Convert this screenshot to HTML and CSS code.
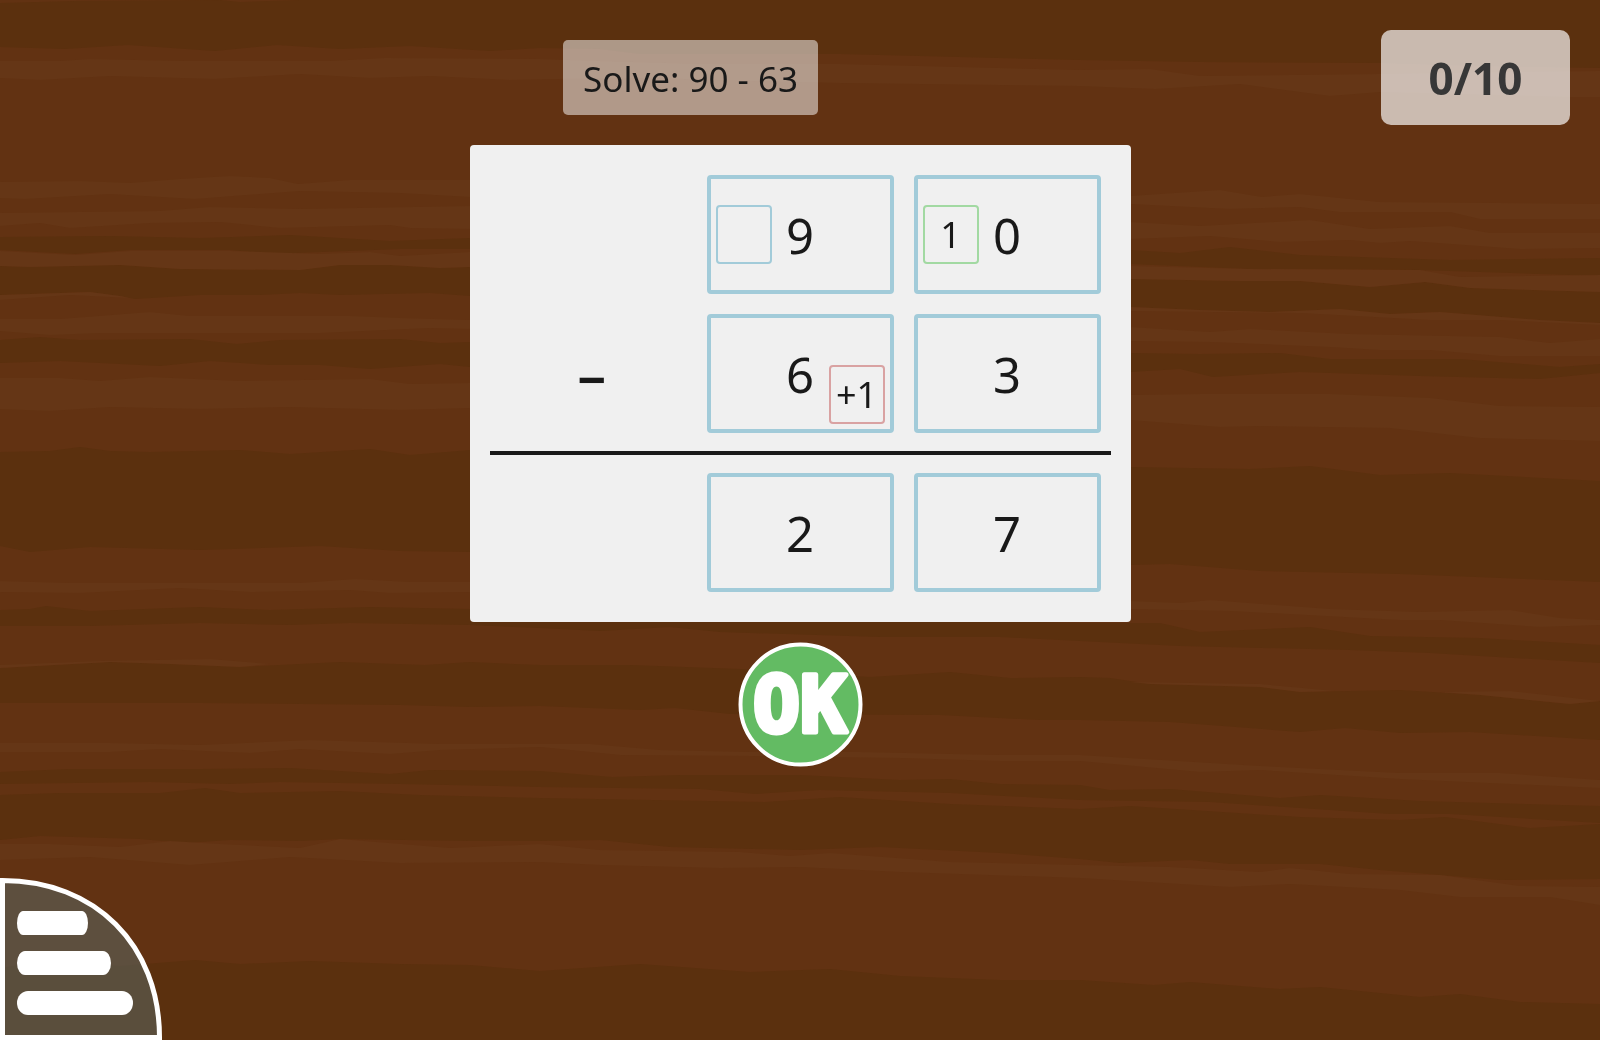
FILE: index.html
```html
<!DOCTYPE html>
<html lang="en">
<head>
<meta charset="utf-8">
<meta name="viewport" content="width=device-width, initial-scale=1">
<title>Vertical subtraction</title>
<link rel="stylesheet" href="styles.css">
</head>
<body>
<svg class="wood" viewBox="0 0 1600 1040" preserveAspectRatio="none" aria-hidden="true">
  <g class="grain-dark">
    <path d="M0 3L75 1L220 0L240 2L300 0H1600V68L1480 66L1380 63L1200 62L1080 60L840 54L640 54L600 49L540 48L490 51L410 46L340 49L277 45L215 51L128 45L65 49L0 47Z"/>
    <path d="M0 237L110 236L200 238L290 235L390 241L470 238L1130 250L1180 253L1230 247L1300 255L1450 260L1600 258V276L1420 270L1250 269L1130 264L470 249L400 249L270 254L230 250L130 250L75 254L0 250Z"/>
    <path d="M0 266L30 267L120 265L180 269L300 270L340 265L390 265L440 268L470 267L1130 279L1240 281L1300 281L1370 287L1425 282L1470 288L1600 292V323L1540 320L1440 312L1390 314L1340 309L1270 312L1200 310L1130 307L470 296L430 293L340 295L300 293L260 295L200 295L135 299L120 296L90 292L0 295Z"/>
    <path d="M0 340L40 337L80 340L190 339L237 344L280 340L400 339L440 343L470 342L1130 353L1200 354L1280 353L1330 359L1460 359L1560 367L1600 364V373L1570 376L1540 379L1420 376L1300 372L1213 377L1180 369L1130 372L470 367L440 364L370 369L320 365L270 365L210 361L160 366L60 361L0 363Z"/>
    <path d="M0 452L50 451L80 447L110 451L150 452L240 450L290 454L370 449L410 455L470 450L1130 467L1250 469L1310 466L1380 475L1450 473L1600 481V582L1400 574L1260 571L1170 564L1130 565L470 552L400 551L320 546L200 550L90 547L30 552L0 546Z"/>
    <path d="M0 610L30 609L46 606L90 611L200 607L270 610L370 607L470 609L1080 623L1160 623L1200 632L1310 627L1370 636L1480 638L1600 645V663L1430 653L1350 650L1180 646L1080 641L1000 637L880 637L720 632L670 627L600 631L540 628L470 625L350 623L290 625L200 623L90 626L0 626Z"/>
    <path d="M0 668L110 662L170 664L240 667L340 662L425 665L470 662L540 665L630 665L740 669L870 677L950 672L1010 678L1080 677L1110 678L1150 684L1260 687L1300 692L1400 690L1480 695L1570 704L1600 701V740L1470 732L1400 733L1345 728L1300 732L1170 722L1080 720L1040 720L940 715L730 714L675 708L640 710L540 706L470 707L400 705L200 703L0 703Z"/>
    <path d="M0 772L70 769L200 769L290 768L390 774L430 770L540 771L612 777L680 775L800 775L900 780L950 779L1000 784L1080 785L1110 790L1170 789L1280 798L1320 795L1420 801L1600 806V823L1450 814L1390 814L1210 802L1080 800L950 793L820 790L755 794L700 789L540 787L400 784L280 782L230 784L150 782L0 784Z"/>
    <path d="M0 795L60 793L160 793L205 788L240 793L340 791L420 795L540 798L765 802L840 797L950 804L1080 809L1130 806L1300 817L1400 820L1445 817L1530 828L1600 824V879L1500 880L1380 870L1320 864L1230 864L1190 860L1120 863L1080 859L1000 853L880 847L800 850L670 847L600 840L540 841L470 841L340 839L300 841L230 840L185 843L140 839L40 836L0 840Z"/>
    <path d="M0 968L40 962L120 966L195 960L240 964L310 961L400 964L470 965L540 971L640 964L750 972L830 969L900 976L1000 980L1080 980L1154 985L1190 982L1280 989L1320 987L1420 997L1460 994L1520 1002L1600 1004V1040H0Z"/>
  </g>
  <g class="grain-light">
    <path d="M0 61L60 61L90 59L185 61L330 61L385 58L540 59L600 61L700 64L840 64L1080 70L1150 69L1200 76L1380 74L1500 72L1600 71V97L1570 97L1380 92L1330 96L1240 84L1155 89L1080 86L840 83L750 81L650 78L560 79L510 80L430 76L370 78L300 74L215 79L110 76L40 80L0 78Z"/>
    <path d="M0 182L80 181L130 183L180 179L230 176L270 178L298 184L350 180L470 180L1130 196L1220 190L1262 197L1300 194L1380 202L1600 204V219L1480 219L1450 212L1340 212L1300 207L1230 209L1130 204L470 197L400 193L300 191L195 199L110 194L25 199L0 198Z"/>
    <path d="M0 213L160 211L210 207L300 209L470 206L1130 222L1200 226L1310 220L1370 229L1450 226L1490 233L1600 233V248L1520 249L1410 241L1380 243L1350 240L1280 242L1210 236L1130 239L470 229L410 228L390 225L280 228L220 222L150 223L70 228L40 223L0 226Z"/>
    <path d="M0 251L75 255L130 251L230 251L320 254L370 252L400 256L470 252L1130 266L1250 269L1420 270L1460 277L1600 275V292L1470 288L1425 282L1370 287L1300 281L1240 281L1130 279L470 267L440 268L390 265L340 265L300 270L180 269L120 265L30 267L0 266Z"/>
    <path d="M0 295L90 292L120 296L130 298L70 295L0 300Z"/>
    <path d="M1130 307L1200 310L1270 312L1340 309L1390 314L1440 312L1540 320L1600 323V325L1500 320L1430 320L1300 313L1130 311Z"/>
    <path d="M0 319L60 319L150 312L190 316L350 316L400 318L470 320L1130 327L1210 332L1250 329L1350 334L1500 337L1550 343L1600 339V356L1500 356L1430 350L1380 350L1330 347L1210 342L1130 341L470 329L430 328L320 333L230 333L100 333L50 335L0 331Z"/>
    <path d="M0 378L60 378L100 381L150 377L240 381L370 379L410 384L470 383L1130 395L1200 394L1330 394L1430 398L1500 406L1600 407V441L1480 438L1390 428L1260 426L1220 427L1130 420L470 408L400 410L290 407L200 409L110 407L50 411L0 409Z"/>
    <path d="M0 581L70 583L200 583L300 583L355 579L410 582L470 582L1130 601L1180 603L1210 600L1330 609L1420 612L1510 610L1560 618L1600 620V625L1540 627L1440 620L1400 620L1230 611L1130 609L470 592L390 593L350 590L250 592L180 588L80 593L0 592Z"/>
    <path d="M0 665L100 661L210 659L270 664L240 667L170 664L110 662L0 668Z"/>
    <path d="M1130 682L1260 684L1335 691L1300 692L1260 687L1150 684Z"/>
    <path d="M1440 692L1510 691L1600 701L1570 704L1480 695Z"/>
    <path d="M0 743L110 743L200 745L310 740L440 744L590 744L660 750L750 752L860 752L1000 755L1080 755L1260 766L1400 773L1500 773L1600 780V788L1400 779L1260 770L1200 772L1080 761L1000 761L900 758L750 756L620 755L540 747L440 750L390 754L300 749L250 753L160 749L110 752L0 752Z"/>
    <path d="M0 844L50 844L120 847L170 841L220 844L300 848L340 839L450 848L540 844L600 850L740 852L790 856L830 853L950 862L1080 865L1170 867L1260 872L1290 868L1350 874L1440 875L1520 886L1600 887V905L1550 897L1460 897L1400 890L1290 884L1230 887L1080 878L900 872L800 867L720 868L600 865L540 862L400 863L290 857L190 865L90 857L0 860Z"/>
  </g>
</svg>

<div class="activity">
  <header class="top-bar">
    <h1 class="prompt">Solve: 90 - 63</h1>
    <p class="score">0/10</p>
  </header>

  <main class="workspace">
    <section class="board" aria-label="Subtraction in columns">
      <div class="row">
        <span class="slot"></span>
        <div class="cell">
          <button class="helper" type="button" aria-label="Borrow from the tens"></button>
          <span class="digit">9</span>
        </div>
        <div class="cell">
          <button class="helper helper-borrow" type="button">1</button>
          <span class="digit">0</span>
        </div>
      </div>
      <div class="row">
        <span class="slot operator">−</span>
        <div class="cell">
          <span class="digit">6</span>
          <button class="helper helper-carry" type="button">+1</button>
        </div>
        <div class="cell">
          <span class="digit">3</span>
        </div>
      </div>
      <hr class="rule">
      <div class="row">
        <span class="slot"></span>
        <input class="cell answer" type="text" inputmode="numeric" maxlength="1" value="2" aria-label="Tens of the result">
        <input class="cell answer" type="text" inputmode="numeric" maxlength="1" value="7" aria-label="Units of the result">
      </div>
    </section>

    <button class="ok" type="button">
      <svg class="ok-icon" viewBox="0 0 125 125">
        <circle class="ok-disc" cx="62.5" cy="62.5" r="60"/>
        <text class="ok-text" x="62" y="90">OK</text>
      </svg>
    </button>
  </main>

  <button class="menu" type="button" aria-label="Menu">
    <svg class="menu-icon" viewBox="0 0 162 162" aria-hidden="true">
      <path class="menu-shape" d="M2.5 2.5C95 2.5 159.5 67 159.5 159.5H2.5Z"/>
      <rect x="17" y="33" width="71" height="24" rx="6" ry="12"/>
      <rect x="17" y="73" width="94" height="24" rx="8" ry="12"/>
      <rect x="17" y="113" width="116" height="24" rx="11" ry="12"/>
    </svg>
  </button>
</div>
</body>
</html>
```

FILE: styles.css
```css
* {
  box-sizing: border-box;
}

body {
  margin: 0;
  background: #623212;
  color: #191919;
  font-family: "Noto Sans", sans-serif;
}

button,
input {
  margin: 0;
  padding: 0;
  border: 0;
  background: none;
  color: inherit;
  font: inherit;
}

button {
  cursor: pointer;
}

/* Wood background */
.wood {
  position: fixed;
  inset: 0;
  z-index: -1;
  width: 100%;
  height: 100%;
}

.grain-dark {
  fill: #5b300e;
}

.grain-light {
  fill: #653616;
}

.activity {
  display: flex;
  flex-direction: column;
  min-height: 100vh;
}

/* Question and score */
.top-bar {
  display: grid;
  grid-template-columns: 1fr auto;
  align-items: center;
  padding: 30px 30px 20px 0;
}

.prompt {
  justify-self: center;
  margin: 0;
  padding: 2px 20px 0;
  border-radius: 5px;
  background: rgba(255, 255, 255, 0.5);
  font-size: 35px;
  font-weight: 400;
  line-height: 73px;
}

.score {
  min-width: 189px;
  margin: 0;
  padding-top: 2px;
  border-radius: 10px;
  background: rgba(255, 255, 255, 0.67);
  color: #373737;
  font-size: 44px;
  font-weight: 700;
  line-height: 93px;
  text-align: center;
}

/* Column subtraction */
.workspace {
  display: flex;
  flex-direction: column;
  align-items: center;
  gap: 20px;
}

.board {
  padding: 30px 30px 30px 20px;
  border-radius: 4px;
  background: #f0f0f0;
}

.row {
  display: grid;
  grid-template-columns: 197px 187px 187px;
  gap: 20px;
}

.row + .row {
  margin-top: 20px;
}

.slot {
  display: grid;
  place-items: center;
}

.operator {
  padding: 10px 0 0 8px;
  font-size: 50px;
  font-weight: 700;
}

.cell {
  display: grid;
  grid-template-columns: 56px 1fr 56px;
  align-items: center;
  height: 119px;
  padding: 5px;
  border: 4px solid #a2cbd9;
  border-radius: 4px;
  font-size: 49px;
  line-height: 60px;
  text-align: center;
}

.digit {
  grid-column: 2;
}

.answer {
  min-width: 0;
}

.helper {
  height: 59px;
  border: 2px solid #a2cbd9;
  border-radius: 4px;
  font-size: 36px;
  line-height: 55px;
}

.helper-borrow {
  border-color: #a2d9a2;
}

.helper-carry {
  align-self: end;
  border-color: #d9a2a2;
}

.rule {
  height: 4px;
  margin: 18px -10px 18px 0;
  border: 0;
  background: #191919;
}

/* Controls */
.ok {
  border-radius: 50%;
}

.ok-icon {
  display: block;
  width: 125px;
  height: 125px;
}

.ok-disc {
  fill: #63bb63;
  stroke: #fff;
  stroke-width: 4px;
}

.ok-text {
  fill: #fff;
  stroke: #fff;
  stroke-width: 5px;
  stroke-linejoin: round;
  font-family: "DejaVu Sans Mono", monospace;
  font-size: 78px;
  font-weight: 700;
  text-anchor: middle;
}

.menu {
  align-self: flex-start;
  margin-top: auto;
}

.menu-icon {
  display: block;
  width: 162px;
  height: 162px;
  fill: #fff;
}

.menu-shape {
  fill: rgba(90, 98, 91, 0.6);
  stroke: #fff;
  stroke-width: 5px;
}
```
